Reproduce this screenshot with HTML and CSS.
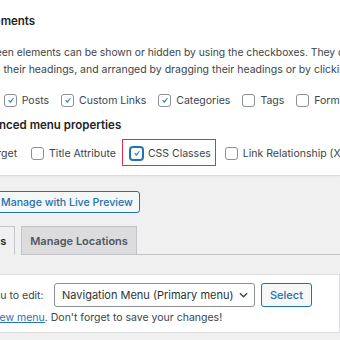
FILE: index.html
```html
<!DOCTYPE html>
<html>
<head>
<meta charset="utf-8">
<link rel="stylesheet" href="styles.css">
</head>
<body>
<div class="screen-options">
  <div class="legend">Screen elements</div>
  <p class="desc"><span class="line">Some screen elements can be shown or hidden by using the checkboxes. They can be expanded and collapsed by</span><span class="line line2">clicking on their headings, and arranged by dragging their headings or by clicking on the up and down arrows.</span></p>
  <div class="checks row-boxes">
    <label class="opt"><span class="cb"></span>Pages</label>
    <label class="opt"><span class="cb on"><svg viewBox="0 0 20 20"><path d="M14.83 4.89l1.34.94-5.81 8.38H9.02L5.78 9.67l1.34-1.25 2.57 2.4z"/></svg></span>Posts</label>
    <label class="opt"><span class="cb on"><svg viewBox="0 0 20 20"><path d="M14.83 4.89l1.34.94-5.81 8.38H9.02L5.78 9.67l1.34-1.25 2.57 2.4z"/></svg></span>Custom Links</label>
    <label class="opt"><span class="cb on"><svg viewBox="0 0 20 20"><path d="M14.83 4.89l1.34.94-5.81 8.38H9.02L5.78 9.67l1.34-1.25 2.57 2.4z"/></svg></span>Categories</label>
    <label class="opt"><span class="cb"></span>Tags</label>
    <label class="opt"><span class="cb"></span>Formats</label>
  </div>
  <div class="legend legend-adv">Show advanced menu properties</div>
  <div class="checks row-adv">
    <label class="opt"><span class="cb"></span>Link Target</label>
    <label class="opt"><span class="cb"></span>Title Attribute</label>
    <label class="opt marked"><span class="cb on focus"><svg viewBox="0 0 20 20"><path d="M14.83 4.89l1.34.94-5.81 8.38H9.02L5.78 9.67l1.34-1.25 2.57 2.4z"/></svg></span>CSS Classes</label>
    <label class="opt"><span class="cb"></span>Link Relationship (XFN)</label>
  </div>
</div>
<div class="content">
  <div class="live-row"><a class="button">Manage with Live Preview</a></div>
  <div class="tabs">
    <a class="tab active">Edit Menus</a>
    <a class="tab">Manage Locations</a>
    <div class="tab-fill"></div>
  </div>
  <div class="manage">
    <div class="select-row">
      <span class="label">Select a menu to edit:</span>
      <div class="select">Navigation Menu (Primary menu)<svg class="chev" viewBox="0 0 10 6"><path d="M1 1l4 4 4-4" fill="none" stroke="#3c434a" stroke-width="1.4"/></svg></div>
      <a class="button small">Select</a>
    </div>
    <p class="note">or <a class="link">create a new menu</a>. Don't forget to save your changes!</p>
  </div>
</div>
</body>
</html>
```
FILE: styles.css
```css
* { box-sizing: border-box; }
html, body { margin: 0; padding: 0; }
body {
  width: 340px;
  height: 340px;
  overflow: hidden;
  background: #f0f0f1;
  font-family: Inter, "Noto Sans", sans-serif;
  font-size: 10.5px;
  color: #3c434a;
}
.screen-options {
  background: #fff;
  height: 176px;
  border-bottom: 1px solid #dcdcde;
  box-shadow: 0 1px 2px rgba(0,0,0,.04);
  padding-top: 14px;
  white-space: nowrap;
}
.legend {
  font-weight: 600;
  font-size: 11.5px;
  line-height: 14px;
  color: #1d2327;
  margin-left: -58px;
}
.desc {
  margin: 15px 0 0 -50px;
  line-height: 18px;
  font-size: 10.3px;
}
.line { display: block; }
.line2 { margin-left: -3px; font-size: 10.5px; }
.checks {
  display: flex;
  align-items: center;
  height: 18px;
}
.row-boxes { margin: 12px 0 0 -57px; }
.legend-adv { margin: 9px 0 0 -62px; }
.row-adv { margin: 12px 0 0 -56px; }
.opt {
  display: inline-flex;
  align-items: center;
  gap: 5px;
  margin-right: 12px;
  position: relative;
}
.row-adv .opt { margin-right: 14px; }
.cb {
  width: 13px;
  height: 13px;
  border: 1px solid #8c8f94;
  border-radius: 3px;
  background: #fff;
  display: inline-flex;
  align-items: center;
  justify-content: center;
  flex: none;
}
.cb svg { width: 15px; height: 15px; fill: #3582c4; }
.cb.focus {
  border-color: #2271b1;
  box-shadow: 0 0 0 1px #2271b1;
}
.marked::after {
  content: "";
  position: absolute;
  left: -8px;
  right: -5px;
  top: -8px;
  bottom: -6px;
  border: 1.5px solid #e0314b;
}
.content { white-space: nowrap; }
.live-row { margin: 15px 0 0 -10px; }
.button {
  display: inline-flex;
  align-items: center;
  height: 22px;
  padding: 0 6px 0 10px;
  border: 1px solid #2271b1;
  border-radius: 3px;
  background: #f6f7f7;
  color: #2271b1;
  font-weight: 500;
  font-size: 10.6px;
}
.tabs {
  display: flex;
  align-items: flex-end;
  margin: 13px 0 0 -68px;
  height: 29px;
}
.tab {
  height: 29px;
  display: inline-flex;
  align-items: center;
  padding: 0 8px;
  border: 1px solid #c3c4c7;
  border-bottom: 1px solid #c3c4c7;
  background: #dcdcde;
  color: #50575e;
  font-weight: 600;
  font-size: 11px;
  margin-left: 6px;
}
.tab.active {
  background: #f0f0f1;
  border-bottom-color: #f0f0f1;
  color: #1d2327;
}
.tab-fill { flex: 1; border-bottom: 1px solid #c3c4c7; height: 29px; }
.manage {
  margin: 19px 0 0 -20px;
  background: #fff;
  border: 1px solid #dcdcde;
  height: 59px;
  padding: 8px 0 0 0;
}
.select-row { display: flex; align-items: center; height: 24px; }
.label { margin-left: -45px; width: 118px; }
.select {
  display: inline-flex;
  align-items: center;
  height: 24px;
  width: 201px;
  padding: 0 6px 0 7px;
  border: 1px solid #8c8f94;
  border-radius: 3px;
  font-size: 11px;
  color: #2c3338;
  justify-content: space-between;
}
.chev { width: 9px; height: 6px; }
.button.small { height: 24px; margin-left: 6px; padding: 0 8px; font-size: 11px; }
.note { margin: 4px 0 0 -44px; line-height: 14px; }
.link { color: #2271b1; text-decoration: underline; }
```
